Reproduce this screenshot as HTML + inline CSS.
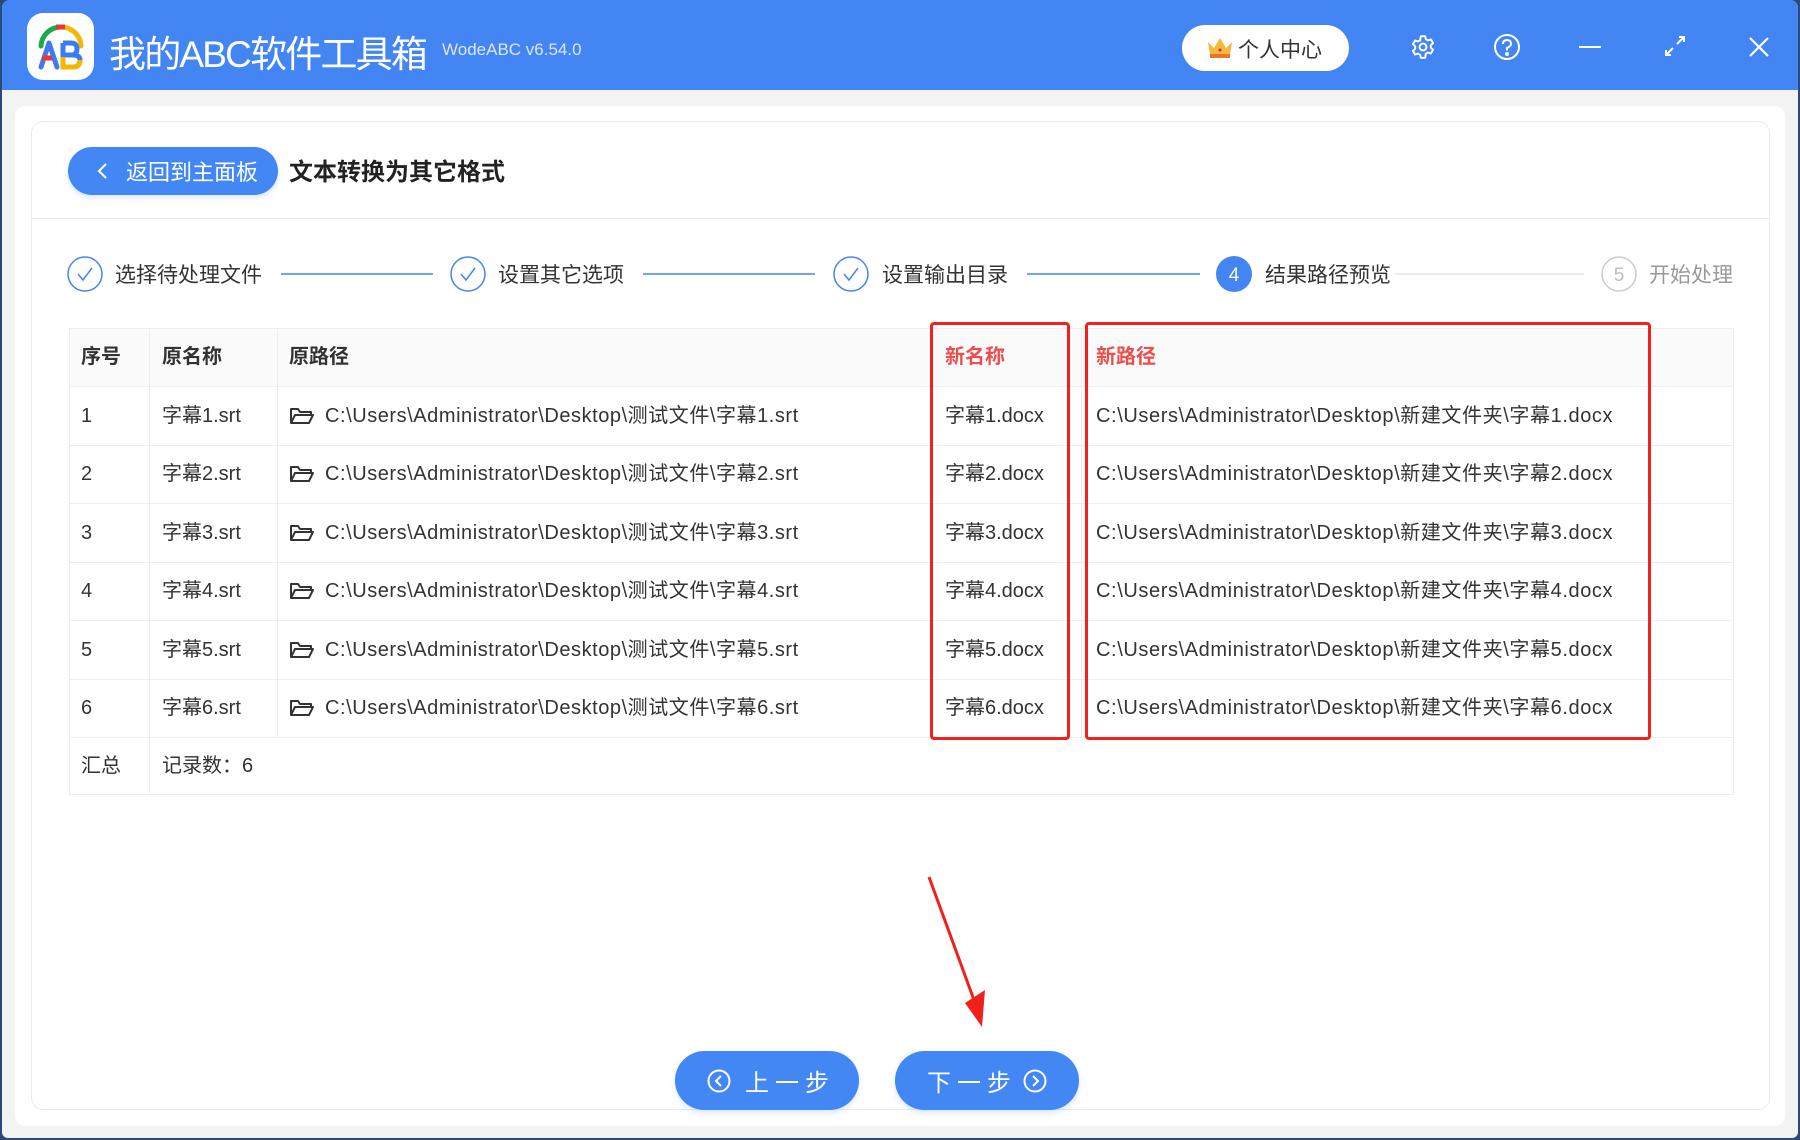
<!DOCTYPE html>
<html><head><meta charset="utf-8">
<style>
*{margin:0;padding:0;box-sizing:border-box}
body{width:1800px;height:1140px;overflow:hidden;background:#2a4a7a;font-family:"Liberation Sans","Noto Sans CJK SC",sans-serif;color:#333;position:relative}
.a{position:absolute}
#win{left:2px;top:0;width:1796px;height:1138px;background:#f3f3f3;border-radius:8px 8px 6px 6px;overflow:hidden}
#bar{left:0;top:0;width:1796px;height:90px;background:#4385f3}
.t{white-space:nowrap}
.cell{position:absolute;font-size:20px;line-height:24px;color:#333;white-space:nowrap}
.p1{letter-spacing:0.55px}
.p2{letter-spacing:0.6px}
.hl{position:absolute;height:1px;background:#ebeef5}
.vl{position:absolute;width:1px;background:#ebeef5}
.btn{background:#4387f4;color:#fff;border-radius:30px;box-shadow:0 3px 6px rgba(67,135,244,.2)}
</style></head><body>
<div id="win" class="a">
 <div id="bar" class="a">
  <div class="a" style="left:25px;top:13px;width:67px;height:67px;background:#fff;border-radius:16px">
   <svg width="67" height="67" viewBox="0 0 67 67">
    <path d="M14 33 A20 20 0 0 1 33 14" stroke="#1fa84a" stroke-width="5" fill="none" stroke-linecap="round"/>
    <path d="M33 14 A20 20 0 0 1 54 33" stroke="#f5b800" stroke-width="5" fill="none" stroke-linecap="round"/>
    <path d="M29 14 L38 14" stroke="#e53935" stroke-width="5"/>
    <path d="M14 54 L22 30 L30 54 M17 45 L27 45" stroke="#3b7df0" stroke-width="5" fill="none" stroke-linecap="round" stroke-linejoin="round"/>
    <path d="M15 45 L25 45" stroke="#e53935" stroke-width="5"/>
    <path d="M36 30 L36 54 L46 54 Q53 54 53 47 Q53 42 46 42 L36 42 M36 30 L44 30 Q50 30 50 36 Q50 42 44 42" stroke="#3b7df0" stroke-width="5" fill="none" stroke-linejoin="round"/>
    <path d="M36 44 L36 54 L46 54 Q53 54 53 47" stroke="#f5b800" stroke-width="5" fill="none"/>
   </svg>
  </div>
  <div class="a t" style="left:107px;top:24px;font-size:37px;color:#fff;letter-spacing:-1.8px">我的ABC软件工具箱</div>
  <div class="a t" style="left:440px;top:40px;font-size:17px;color:#dbe7fd">WodeABC v6.54.0</div>
  <div class="a" style="left:1180px;top:25px;width:167px;height:46px;background:#fff;border-radius:23px">
   <svg class="a" style="left:24px;top:11px" width="28" height="24" viewBox="0 0 28 24"><path d="M2 6 L8 12 L14 2 L20 12 L26 6 L24 19 L4 19 Z" fill="#f8b73a"/><rect x="4" y="18" width="20" height="4" fill="#e9742f"/><circle cx="14" cy="14" r="1.5" fill="#b33"/></svg>
   <div class="a t" style="left:56px;top:9px;font-size:21px;color:#333">个人中心</div>
  </div>
  <svg class="a" style="left:1408px;top:34px" width="26" height="26" viewBox="0 0 24 24" fill="none" stroke="#fff" stroke-width="1.8"><circle cx="12" cy="12" r="3.2"/><path d="M10 2h4l.6 2.8 2 1.1 2.7-.9 2 3.4-2.1 1.9v2.4l2.1 1.9-2 3.4-2.7-.9-2 1.1L14 22h-4l-.6-2.8-2-1.1-2.7.9-2-3.4 2.1-1.9v-2.4L2.7 9.4l2-3.4 2.7.9 2-1.1z" stroke-linejoin="round"/></svg>
  <svg class="a" style="left:1491px;top:33px" width="28" height="28" viewBox="0 0 28 28" fill="none" stroke="#fff" stroke-width="2"><circle cx="14" cy="14" r="12"/><path d="M10 11 Q10 7 14 7 Q18 7 18 11 Q18 13 14 15 L14 17.5"/><circle cx="14" cy="21" r="1" fill="#fff"/></svg>
  <div class="a" style="left:1577px;top:46px;width:22px;height:2px;background:#fff"></div>
  <svg class="a" style="left:1661px;top:34px" width="24" height="24" viewBox="0 0 24 24" fill="none" stroke="#fff" stroke-width="2"><path d="M14 10 L21 3 M16 3 H21 V8 M10 14 L3 21 M3 16 V21 H8"/></svg>
  <svg class="a" style="left:1746px;top:36px" width="22" height="22" viewBox="0 0 22 22" stroke="#fff" stroke-width="2.2"><path d="M2 2 L20 20 M20 2 L2 20"/></svg>
 </div>
 <div class="a" style="left:13px;top:106px;width:1770px;height:1020px;background:#fff;border-radius:10px"></div>
 <div class="a" style="left:29px;top:121px;width:1739px;height:989px;background:#fff;border:1px solid #ebebeb;border-radius:12px"></div>
 <div class="a btn" style="left:66px;top:147px;width:210px;height:48px;border-radius:24px">
  <svg class="a" style="left:28px;top:15px" width="12" height="18" viewBox="0 0 12 18" fill="none" stroke="#fff" stroke-width="2"><path d="M10 2 L3 9 L10 16"/></svg>
  <div class="a t" style="left:58px;top:8px;font-size:22px">返回到主面板</div>
 </div>
 <div class="a t" style="left:287px;top:152px;font-size:24px;font-weight:bold;color:#222">文本转换为其它格式</div>
 <div class="a" style="left:30px;top:218px;width:1737px;height:1px;background:#ebebeb"></div>

 <!-- steps -->
 <svg class="a" style="left:0;top:250px" width="1796" height="50">
  <g fill="none" stroke="#4385f3" stroke-width="1.5">
   <circle cx="83" cy="24" r="17"/><path d="M76 24 L81 30 L90 18"/>
   <circle cx="466" cy="24" r="17"/><path d="M459 24 L464 30 L473 18"/>
   <circle cx="849" cy="24" r="17"/><path d="M842 24 L847 30 L856 18"/>
   <path d="M279 24 H431 M641 24 H813 M1025 24 H1198"/>
  </g>
  <circle cx="1232" cy="24" r="18" fill="#4385f3"/>
  <path d="M1393 24 H1582" stroke="#e6e6e6" stroke-width="1.5"/>
  <circle cx="1617" cy="24" r="17" fill="none" stroke="#ccc" stroke-width="1.5"/>
  <text x="1232" y="31" font-size="19" fill="#fff" text-anchor="middle" font-family="Liberation Sans">4</text>
  <text x="1617" y="31" font-size="19" fill="#bbb" text-anchor="middle" font-family="Liberation Sans">5</text>
 </svg>
 <div class="a t" style="left:113px;top:259px;font-size:21px;color:#333">选择待处理文件</div>
 <div class="a t" style="left:496px;top:259px;font-size:21px;color:#333">设置其它选项</div>
 <div class="a t" style="left:880px;top:259px;font-size:21px;color:#333">设置输出目录</div>
 <div class="a t" style="left:1263px;top:259px;font-size:21px;color:#333">结果路径预览</div>
 <div class="a t" style="left:1647px;top:259px;font-size:21px;color:#999">开始处理</div>

 <!-- table -->
 <div class="a" style="left:67px;top:328px;width:1665px;height:467px;border:1px solid #ebeef5"></div>
 <div class="a" style="left:68px;top:329px;width:1663px;height:57px;background:#fafafa"></div>
 <div class="hl" style="left:67px;top:386px;width:1665px"></div>
 <div class="hl" style="left:67px;top:445px;width:1665px"></div>
 <div class="hl" style="left:67px;top:503px;width:1665px"></div>
 <div class="hl" style="left:67px;top:562px;width:1665px"></div>
 <div class="hl" style="left:67px;top:620px;width:1665px"></div>
 <div class="hl" style="left:67px;top:679px;width:1665px"></div>
 <div class="hl" style="left:67px;top:737px;width:1665px"></div>
 <div class="vl" style="left:147px;top:328px;height:467px"></div>
 <div class="vl" style="left:275px;top:328px;height:409px"></div>
 <div class="vl" style="left:929px;top:328px;height:409px"></div>
 <div class="vl" style="left:1079px;top:328px;height:409px"></div>

 <div class="cell" style="left:79px;top:345px;font-weight:bold">序号</div>
 <div class="cell" style="left:160px;top:345px;font-weight:bold">原名称</div>
 <div class="cell" style="left:287px;top:345px;font-weight:bold">原路径</div>
 <div class="cell" style="left:943px;top:345px;font-weight:bold;color:#ee4d4d">新名称</div>
 <div class="cell" style="left:1094px;top:345px;font-weight:bold;color:#ee4d4d">新路径</div>

 <div class="cell" style="left:79px;top:754px">汇总</div>
 <div class="cell" style="left:160px;top:754px">记录数：6</div>

 <div class="cell" style="left:79px;top:404px">1</div><div class="cell" style="left:160px;top:404px">字幕1.srt</div><div class="cell p1" style="left:323px;top:404px">C:\Users\Administrator\Desktop\测试文件\字幕1.srt</div><div class="cell" style="left:943px;top:404px">字幕1.docx</div><div class="cell p2" style="left:1094px;top:404px">C:\Users\Administrator\Desktop\新建文件夹\字幕1.docx</div>
 <div class="cell" style="left:79px;top:462px">2</div><div class="cell" style="left:160px;top:462px">字幕2.srt</div><div class="cell p1" style="left:323px;top:462px">C:\Users\Administrator\Desktop\测试文件\字幕2.srt</div><div class="cell" style="left:943px;top:462px">字幕2.docx</div><div class="cell p2" style="left:1094px;top:462px">C:\Users\Administrator\Desktop\新建文件夹\字幕2.docx</div>
 <div class="cell" style="left:79px;top:521px">3</div><div class="cell" style="left:160px;top:521px">字幕3.srt</div><div class="cell p1" style="left:323px;top:521px">C:\Users\Administrator\Desktop\测试文件\字幕3.srt</div><div class="cell" style="left:943px;top:521px">字幕3.docx</div><div class="cell p2" style="left:1094px;top:521px">C:\Users\Administrator\Desktop\新建文件夹\字幕3.docx</div>
 <div class="cell" style="left:79px;top:579px">4</div><div class="cell" style="left:160px;top:579px">字幕4.srt</div><div class="cell p1" style="left:323px;top:579px">C:\Users\Administrator\Desktop\测试文件\字幕4.srt</div><div class="cell" style="left:943px;top:579px">字幕4.docx</div><div class="cell p2" style="left:1094px;top:579px">C:\Users\Administrator\Desktop\新建文件夹\字幕4.docx</div>
 <div class="cell" style="left:79px;top:638px">5</div><div class="cell" style="left:160px;top:638px">字幕5.srt</div><div class="cell p1" style="left:323px;top:638px">C:\Users\Administrator\Desktop\测试文件\字幕5.srt</div><div class="cell" style="left:943px;top:638px">字幕5.docx</div><div class="cell p2" style="left:1094px;top:638px">C:\Users\Administrator\Desktop\新建文件夹\字幕5.docx</div>
 <div class="cell" style="left:79px;top:696px">6</div><div class="cell" style="left:160px;top:696px">字幕6.srt</div><div class="cell p1" style="left:323px;top:696px">C:\Users\Administrator\Desktop\测试文件\字幕6.srt</div><div class="cell" style="left:943px;top:696px">字幕6.docx</div><div class="cell p2" style="left:1094px;top:696px">C:\Users\Administrator\Desktop\新建文件夹\字幕6.docx</div>
 <svg class="a" style="left:0;top:0" width="1796" height="1138" fill="none" stroke="#333" stroke-width="2" stroke-linejoin="round">
  <path d="M289 423 V409 H296 L298 412 H309 V415 M289 423 L293 415 H311 L307 423 Z"/>
  <path d="M289 481 V467 H296 L298 470 H309 V473 M289 481 L293 473 H311 L307 481 Z"/>
  <path d="M289 540 V526 H296 L298 529 H309 V532 M289 540 L293 532 H311 L307 540 Z"/>
  <path d="M289 598 V584 H296 L298 587 H309 V590 M289 598 L293 590 H311 L307 598 Z"/>
  <path d="M289 657 V643 H296 L298 646 H309 V649 M289 657 L293 649 H311 L307 657 Z"/>
  <path d="M289 715 V701 H296 L298 704 H309 V707 M289 715 L293 707 H311 L307 715 Z"/>
 </svg>

 <div class="a" style="left:928px;top:322px;width:140px;height:418px;border:3.5px solid #f5201c;border-radius:4px"></div>
 <div class="a" style="left:1083px;top:322px;width:566px;height:418px;border:3.5px solid #f5201c;border-radius:4px"></div>

 <svg class="a" style="left:0;top:0" width="1796" height="1138"><path d="M927 877 L972 1000" stroke="#f0201a" stroke-width="3"/><path d="M963 1003 L980 1027 L983 990 Z" fill="#f0201a"/></svg>

 <div class="a btn" style="left:673px;top:1051px;width:184px;height:59px">
  <svg class="a" style="left:32px;top:18px" width="24" height="24" viewBox="0 0 24 24" fill="none" stroke="#fff" stroke-width="2"><circle cx="12" cy="12" r="10.5"/><path d="M14 7 L9 12 L14 17"/></svg>
  <div class="a t" style="left:70px;top:12px;font-size:24px;letter-spacing:6px">上一步</div>
 </div>
 <div class="a btn" style="left:893px;top:1051px;width:184px;height:59px">
  <div class="a t" style="left:32px;top:12px;font-size:24px;letter-spacing:6px">下一步</div>
  <svg class="a" style="left:128px;top:18px" width="24" height="24" viewBox="0 0 24 24" fill="none" stroke="#fff" stroke-width="2"><circle cx="12" cy="12" r="10.5"/><path d="M10 7 L15 12 L10 17"/></svg>
 </div>
</div>
</body></html>
